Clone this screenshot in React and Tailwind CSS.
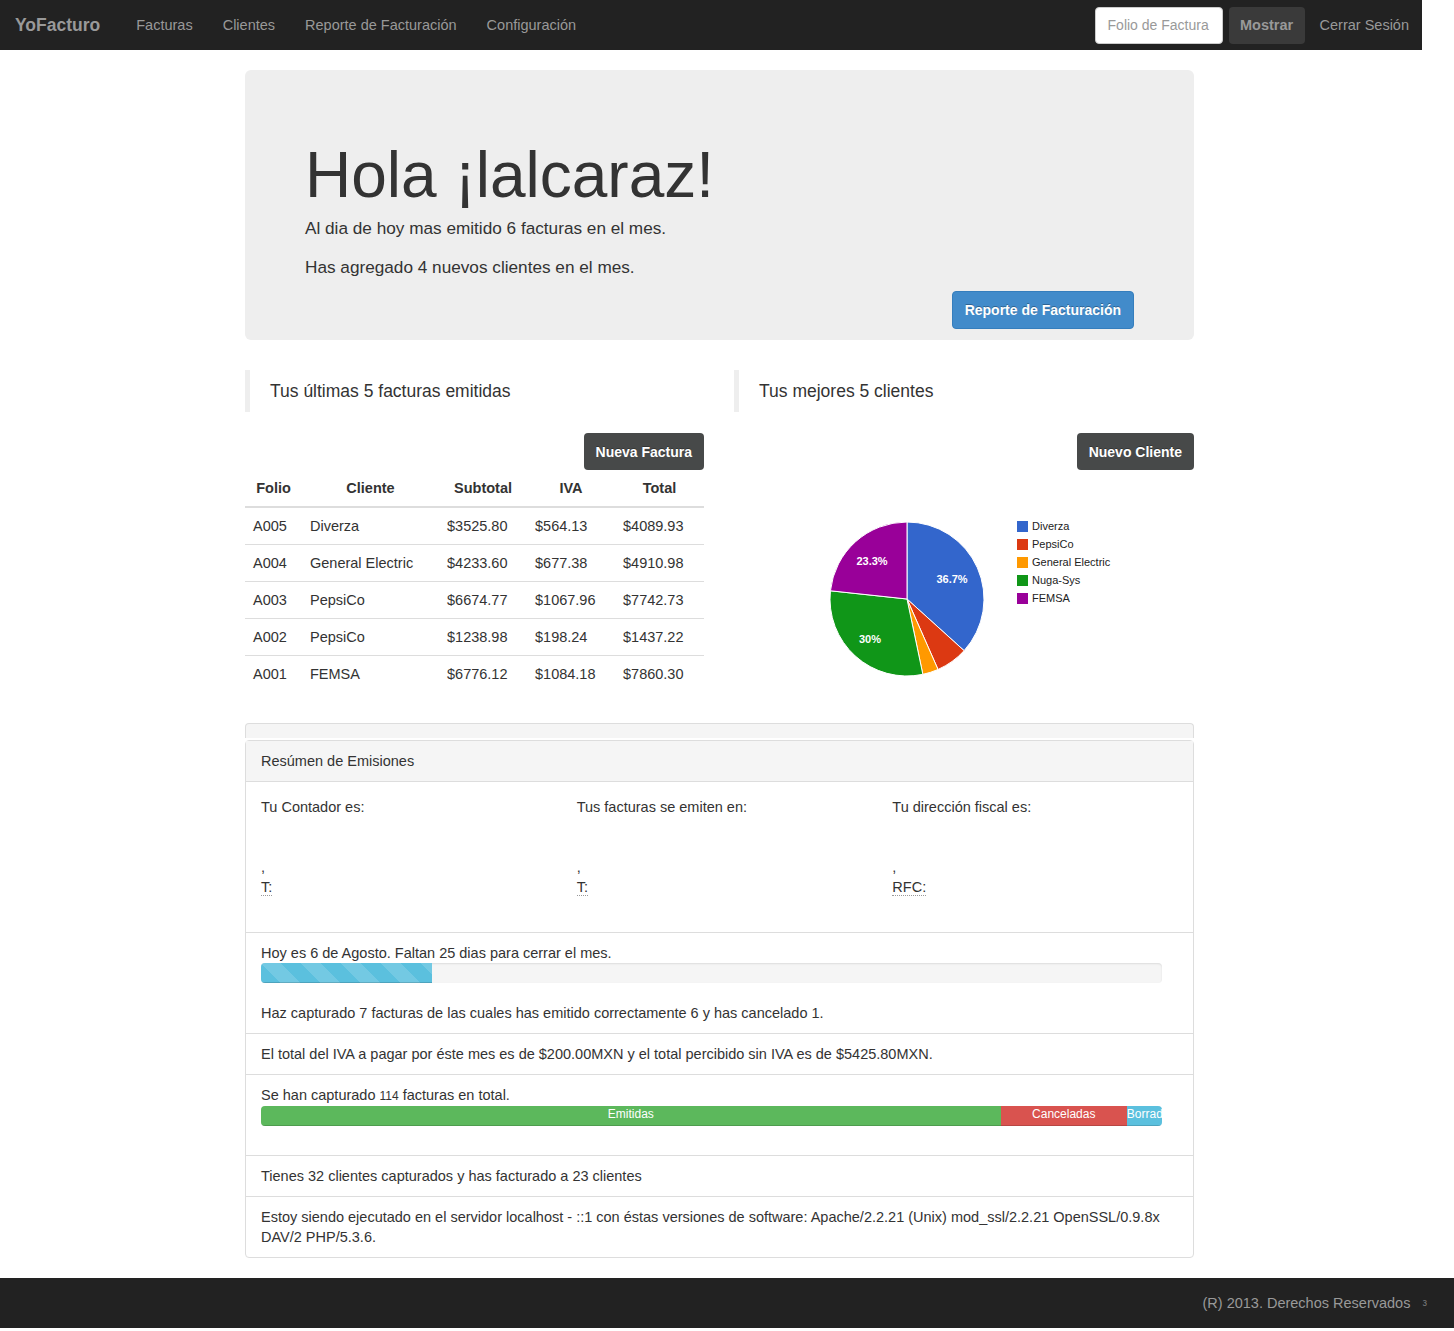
import React from "react";

const facturas = [
  { folio: "A005", cliente: "Diverza", subtotal: "$3525.80", iva: "$564.13", total: "$4089.93" },
  { folio: "A004", cliente: "General Electric", subtotal: "$4233.60", iva: "$677.38", total: "$4910.98" },
  { folio: "A003", cliente: "PepsiCo", subtotal: "$6674.77", iva: "$1067.96", total: "$7742.73" },
  { folio: "A002", cliente: "PepsiCo", subtotal: "$1238.98", iva: "$198.24", total: "$1437.22" },
  { folio: "A001", cliente: "FEMSA", subtotal: "$6776.12", iva: "$1084.18", total: "$7860.30" },
];

const clientes = [
  { name: "Diverza", pct: 36.7, color: "#3366cc" },
  { name: "PepsiCo", pct: 6.7, color: "#dc3912" },
  { name: "General Electric", pct: 3.3, color: "#ff9900" },
  { name: "Nuga-Sys", pct: 30, color: "#109618" },
  { name: "FEMSA", pct: 23.3, color: "#990099" },
];

function PieChart() {
  const cx = 173;
  const cy = 129;
  const r = 77;
  let start = -Math.PI / 2;
  const slices = clientes.map((c) => {
    const sweep = (c.pct / 100) * Math.PI * 2;
    const end = start + sweep;
    const x1 = cx + r * Math.cos(start);
    const y1 = cy + r * Math.sin(start);
    const x2 = cx + r * Math.cos(end);
    const y2 = cy + r * Math.sin(end);
    const large = sweep > Math.PI ? 1 : 0;
    const d = `M${cx},${cy} L${x1},${y1} A${r},${r} 0 ${large} 1 ${x2},${y2} Z`;
    start = end;
    return { ...c, d };
  });

  return (
    <svg width="460" height="222" viewBox="0 0 460 222">
      {slices.map((s) => (
        <path key={s.name} d={s.d} fill={s.color} stroke="#ffffff" strokeWidth="1" />
      ))}
      <g fill="#ffffff" fontSize="11" fontWeight="bold" fontFamily="Liberation Sans, Arial, sans-serif" textAnchor="middle">
        <text x="218" y="113">36.7%</text>
        <text x="138" y="95">23.3%</text>
        <text x="136" y="173">30%</text>
      </g>
      <g fontSize="11" fontFamily="Liberation Sans, Arial, sans-serif" fill="#222222">
        {clientes.map((c, i) => (
          <g key={c.name}>
            <rect x="283" y={51 + i * 18} width="11" height="11" fill={c.color} />
            <text x="298" y={60 + i * 18}>{c.name}</text>
          </g>
        ))}
      </g>
    </svg>
  );
}

export default function App() {
  return (
    <div className="min-h-[1331px] bg-white text-[14.5px] leading-[20px] text-[#333] font-['Liberation_Sans',Arial,sans-serif]">
      {/* NAVBAR */}
      <nav className="flex h-[50px] w-[1422px] items-center justify-between bg-[#222]">
        <div className="flex items-center">
          <span className="pl-[15px] pr-[21px] text-[17.5px] font-bold text-[#999]">YoFacturo</span>
          <ul className="flex text-[#999]">
            <li className="px-[15px]">Facturas</li>
            <li className="px-[15px]">Clientes</li>
            <li className="px-[15px]">Reporte de Facturación</li>
            <li className="px-[15px]">Configuración</li>
          </ul>
        </div>
        <div className="flex items-center">
          <div className="flex h-[37px] w-[128px] items-center overflow-hidden whitespace-nowrap rounded-[4px] border border-[#ccc] bg-white px-[12px] text-[14px] text-[#999]">
            Folio de Factura
          </div>
          <button className="ml-[6px] h-[37px] w-[76px] rounded-[4px] bg-[#3a3a3a] font-bold text-[#999]">
            Mostrar
          </button>
          <span className="pl-[15px] pr-[13px] text-[#999]">Cerrar Sesión</span>
        </div>
      </nav>

      <div className="ml-[245px] w-[949px]">
        {/* JUMBOTRON */}
        <div className="mt-[20px] h-[270px] rounded-[6px] bg-[#eee] px-[60px] pt-[71px]">
          <h1 className="text-[64px] leading-[69px] text-[#333]">Hola ¡lalcaraz!</h1>
          <p className="mt-[4px] text-[17.2px] leading-[29px]">Al dia de hoy mas emitido 6 facturas en el mes.</p>
          <p className="mt-[10px] text-[17.2px] leading-[29px]">Has agregado 4 nuevos clientes en el mes.</p>
          <div className="mt-[9px] flex justify-end">
            <button className="h-[38px] rounded-[4px] border border-[#357ebd] bg-[#428bca] px-[12px] text-[14px] font-bold text-white [text-shadow:0_-1px_0_rgba(0,0,0,0.3)]">
              Reporte de Facturación
            </button>
          </div>
        </div>

        {/* TWO COLUMNS */}
        <div className="mt-[30px] grid grid-cols-[459px_460px] gap-x-[30px]">
          <div>
            <div className="flex h-[42px] items-center border-l-[5px] border-[#eee] pl-[20px] text-[17.5px]">
              Tus últimas 5 facturas emitidas
            </div>
            <div className="mt-[21px] flex justify-end">
              <button className="h-[37px] rounded-[4px] bg-[#474949] px-[12px] text-[14px] font-bold text-white [text-shadow:0_-1px_0_rgba(0,0,0,0.3)]">
                Nueva Factura
              </button>
            </div>
            <table className="w-full border-collapse">
              <thead>
                <tr className="border-b-2 border-[#ddd]">
                  <th className="w-[57px] px-[8px] py-[8px] text-center font-bold">Folio</th>
                  <th className="w-[137px] px-[8px] py-[8px] text-center font-bold">Cliente</th>
                  <th className="w-[88px] px-[8px] py-[8px] text-center font-bold">Subtotal</th>
                  <th className="w-[88px] px-[8px] py-[8px] text-center font-bold">IVA</th>
                  <th className="px-[8px] py-[8px] text-center font-bold">Total</th>
                </tr>
              </thead>
              <tbody>
                {facturas.map((f, i) => (
                  <tr key={f.folio} className={i === 0 ? "" : "border-t border-[#ddd]"}>
                    <td className="px-[8px] py-[8px]">{f.folio}</td>
                    <td className="px-[8px] py-[8px]">{f.cliente}</td>
                    <td className="px-[8px] py-[8px]">{f.subtotal}</td>
                    <td className="px-[8px] py-[8px]">{f.iva}</td>
                    <td className="px-[8px] py-[8px]">{f.total}</td>
                  </tr>
                ))}
              </tbody>
            </table>
          </div>

          <div>
            <div className="flex h-[42px] items-center border-l-[5px] border-[#eee] pl-[20px] text-[17.5px]">
              Tus mejores 5 clientes
            </div>
            <div className="mt-[21px] flex justify-end">
              <button className="h-[37px] rounded-[4px] bg-[#474949] px-[12px] text-[14px] font-bold text-white [text-shadow:0_-1px_0_rgba(0,0,0,0.3)]">
                Nuevo Cliente
              </button>
            </div>
            <PieChart />
          </div>
        </div>

        {/* PANELS */}
        <div className="mt-[31px] h-[15px] rounded-t-[4px] border-x border-t border-[#ddd] bg-[#f5f5f5]" />
        <div className="mt-[2px] rounded-[4px] border border-[#ddd]">
          <div className="border-b border-[#ddd] bg-[#f5f5f5] px-[15px] py-[10px]">Resúmen de Emisiones</div>
          <div className="grid grid-cols-3 pt-[15px] pb-[35px]">
            {[
              ["Tu Contador es:", "T:"],
              ["Tus facturas se emiten en:", "T:"],
              ["Tu dirección fiscal es:", "RFC:"],
            ].map(([title, label]) => (
              <div key={title} className="px-[15px]">
                <div>{title}</div>
                <div className="mt-[40px]">,</div>
                <div>
                  <span className="border-b border-dotted border-[#999]">{label}</span>
                </div>
              </div>
            ))}
          </div>

          <div className="border-t border-[#ddd] px-[15px] py-[10px]">
            <div>Hoy es 6 de Agosto. Faltan 25 dias para cerrar el mes.</div>
            <div className="mb-[20px] h-[20px] w-[901px] overflow-hidden rounded-[4px] bg-[#f5f5f5] shadow-[inset_0_1px_2px_rgba(0,0,0,0.1)]">
              <div className="h-full w-[19%] bg-[#5bc0de] bg-[linear-gradient(45deg,rgba(255,255,255,0.15)_25%,transparent_25%,transparent_50%,rgba(255,255,255,0.15)_50%,rgba(255,255,255,0.15)_75%,transparent_75%,transparent)] bg-[length:40px_40px] shadow-[inset_0_-1px_0_rgba(0,0,0,0.15)]" />
            </div>
            <div>Haz capturado 7 facturas de las cuales has emitido correctamente 6 y has cancelado 1.</div>
          </div>

          <div className="border-t border-[#ddd] px-[15px] py-[10px]">
            El total del IVA a pagar por éste mes es de $200.00MXN y el total percibido sin IVA es de $5425.80MXN.
          </div>

          <div className="border-t border-[#ddd] px-[15px] pt-[10px] pb-[29px]">
            <div>
              Se han capturado <span className="text-[12px]">114</span> facturas en total.
            </div>
            <div className="flex h-[20px] w-[901px] overflow-hidden rounded-[4px] bg-[#f5f5f5] text-[12px] leading-[16px] text-white">
              <div className="w-[82.1%] bg-[#5cb85c] text-center shadow-[inset_0_-1px_0_rgba(0,0,0,0.15)]">Emitidas</div>
              <div className="w-[14%] bg-[#d9534f] text-center shadow-[inset_0_-1px_0_rgba(0,0,0,0.15)]">Canceladas</div>
              <div className="flex-1 overflow-hidden whitespace-nowrap bg-[#5bc0de] shadow-[inset_0_-1px_0_rgba(0,0,0,0.15)]">Borradores</div>
            </div>
          </div>

          <div className="border-t border-[#ddd] px-[15px] py-[10px]">
            Tienes 32 clientes capturados y has facturado a 23 clientes
          </div>

          <div className="border-t border-[#ddd] px-[15px] py-[10px]">
            Estoy siendo ejecutado en el servidor localhost - ::1 con éstas versiones de software: Apache/2.2.21 (Unix) mod_ssl/2.2.21 OpenSSL/0.9.8x DAV/2 PHP/5.3.6.
          </div>
        </div>
      </div>

      {/* FOOTER */}
      <footer className="mt-[20px] flex h-[50px] w-full items-center justify-end bg-[#222] pr-[27px] text-[#999]">
        <span>(R) 2013. Derechos Reservados</span>
        <span className="ml-[12px] text-[10px] text-[#777]">з</span>
      </footer>
    </div>
  );
}
